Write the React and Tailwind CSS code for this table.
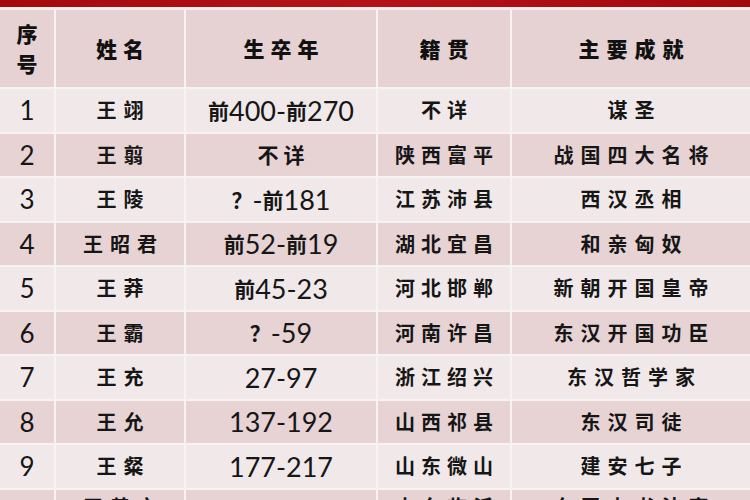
import React from "react";

const rows = [
  ["1", "王翊", "前400-前270", "不详", "谋圣"],
  ["2", "王翦", "不详", "陕西富平", "战国四大名将"],
  ["3", "王陵", "？-前181", "江苏沛县", "西汉丞相"],
  ["4", "王昭君", "前52-前19", "湖北宜昌", "和亲匈奴"],
  ["5", "王莽", "前45-23", "河北邯郸", "新朝开国皇帝"],
  ["6", "王霸", "？-59", "河南许昌", "东汉开国功臣"],
  ["7", "王充", "27-97", "浙江绍兴", "东汉哲学家"],
  ["8", "王允", "137-192", "山西祁县", "东汉司徒"],
  ["9", "王粲", "177-217", "山东微山", "建安七子"],
  ["10", "王羲之", "303-361", "山东临沂", "东晋大书法家"],
];

const cjk = "font-['Noto_Sans_CJK_SC',sans-serif]";
const num = "font-['Lato','Noto_Sans_CJK_SC',sans-serif]";

function Row({ r, idx }) {
  const bg = idx % 2 === 0 ? "bg-[#f1e9e9]" : "bg-[#e7d2d4]";
  const last = idx === rows.length - 1;
  const cell = `${bg} flex justify-center ${last ? "items-start pt-[7px]" : "items-center"} h-[42.5px] text-[#161616]`;
  return (
    <>
      <div className={`${cell} ${num} text-[26px] leading-none`}>{r[0]}</div>
      <div className={`${cell} ${cjk} text-[20px] font-semibold tracking-[7px] pl-[7px] leading-none`}>{r[1]}</div>
      <div className={`${cell} ${num} text-[27px] leading-none`}>
        {r[2].split(/(前|不详|？)/).filter(Boolean).map((p, i) =>
          /前|不详|？/.test(p) ? (
            <span key={i} className={`${cjk} text-[21px] font-semibold ${p === "不详" ? "tracking-[5px] pl-[5px]" : ""}`}>{p}</span>
          ) : (
            <span key={i}>{p}</span>
          )
        )}
      </div>
      <div className={`${cell} ${cjk} text-[20px] font-semibold tracking-[6px] pl-[6px] leading-none`}>{r[3]}</div>
      <div className={`${cell} ${cjk} text-[20px] font-semibold tracking-[7px] pl-[7px] leading-none`}>{r[4]}</div>
    </>
  );
}

export default function App() {
  const head = `bg-[#e6d1d3] flex items-center justify-center h-[77px] ${cjk} font-black text-[21px] text-[#111] leading-none`;
  return (
    <div className="w-[750px] h-[500px] overflow-hidden bg-[#f6f1f1]">
      <div className="h-[7px] bg-gradient-to-r from-[#a3080d] via-[#b5121a] to-[#a3080d]" />
      <div className="h-[3px] bg-[#f4eded]" />
      <div className="grid grid-cols-[54px_128px_190px_132px_1fr] gap-[2px] bg-[#f7f3f3]">
        <div className={`${head} flex-col gap-[9px]`}>
          <span>序</span>
          <span>号</span>
        </div>
        <div className={`${head} tracking-[6px] pl-[6px]`}>姓名</div>
        <div className={`${head} tracking-[6px] pl-[6px]`}>生卒年</div>
        <div className={`${head} tracking-[7px] pl-[7px]`}>籍贯</div>
        <div className={`${head} tracking-[7px] pl-[7px]`}>主要成就</div>
        {rows.map((r, i) => (
          <Row key={i} r={r} idx={i} />
        ))}
      </div>
    </div>
  );
}
